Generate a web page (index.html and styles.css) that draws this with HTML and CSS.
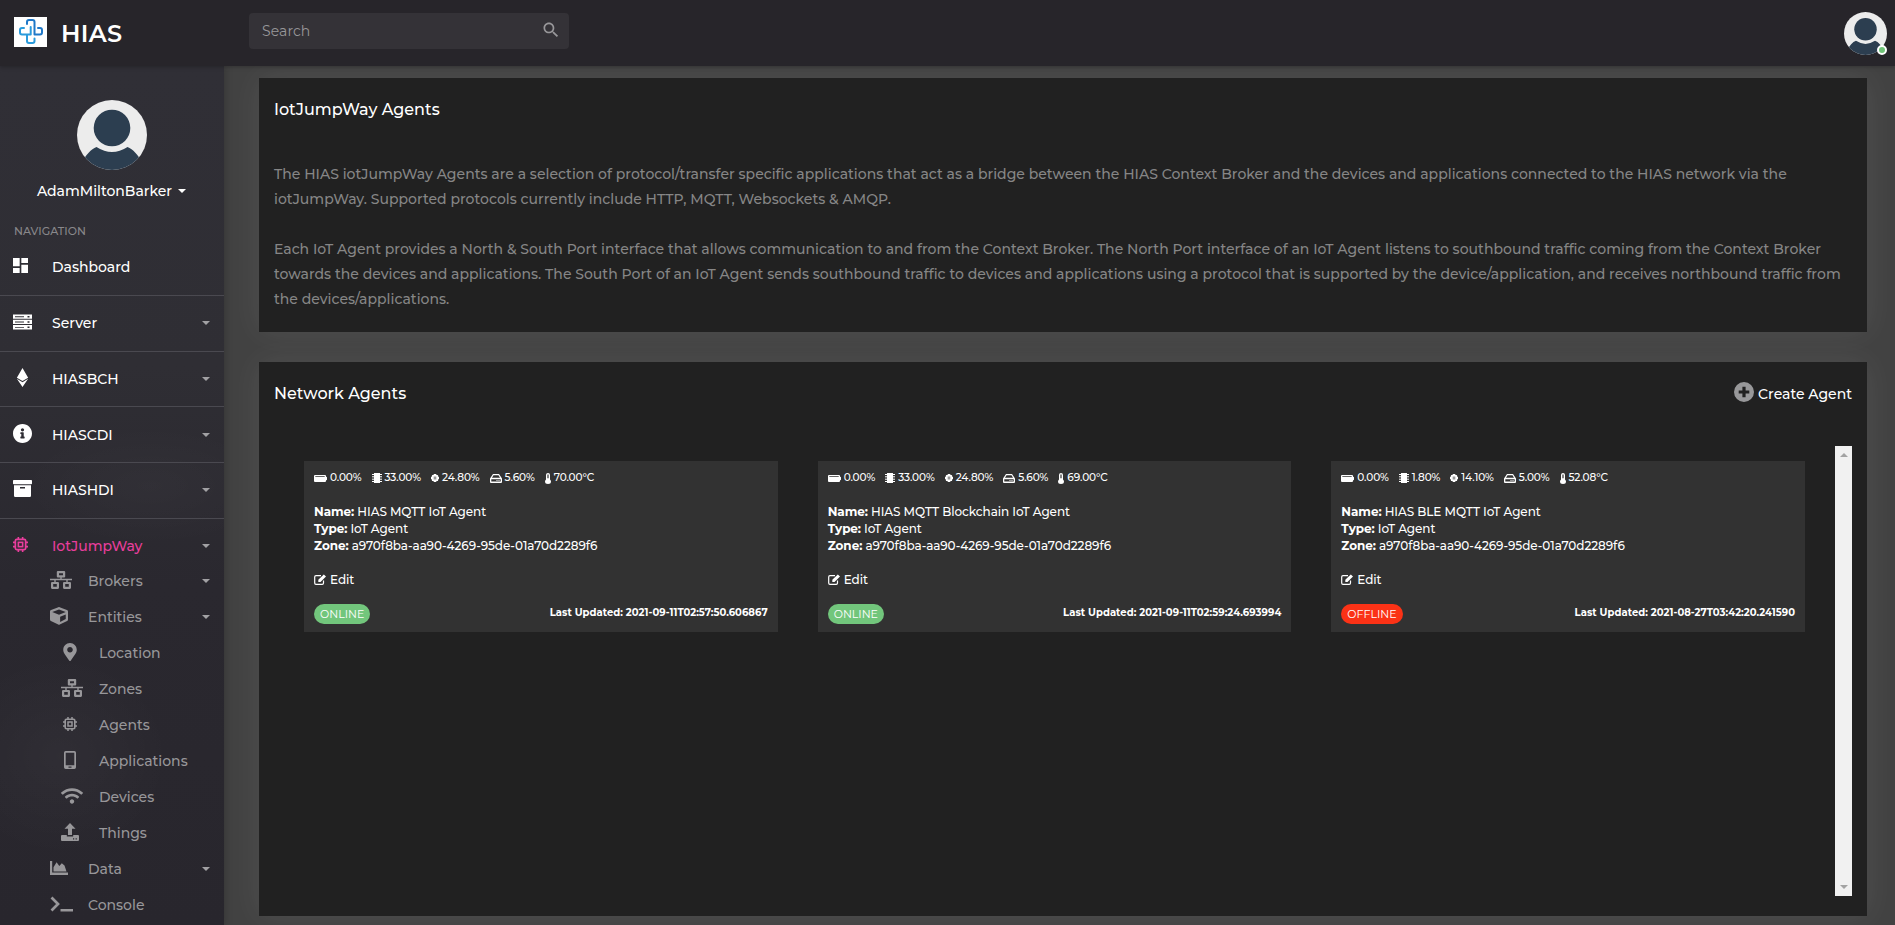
FILE: index.html
```html
<!DOCTYPE html>
<html lang="en">
<head>
    <meta charset="UTF-8">
    <meta name="viewport" content="width=device-width, initial-scale=1.0">
    <title>HIAS</title>
    <link rel="stylesheet" href="styles.css">
</head>
<body>
    <svg class="sprite">
        <symbol id="search" viewBox="0 0 24 24"><path d="M15.5 14h-.79l-.28-.27C15.41 12.59 16 11.11 16 9.5 16 5.91 13.09 3 9.5 3S3 5.91 3 9.5 5.91 16 9.5 16c1.61 0 3.09-.59 4.23-1.57l.27.28v.79l5 4.99L20.49 19l-4.99-5zm-6 0C7.01 14 5 11.99 5 9.5S7.01 5 9.5 5 14 7.01 14 9.5 11.99 14 9.5 14z"/></symbol>
        <symbol id="avatar" viewBox="0 0 70 70">
            <rect width="70" height="70" fill="#ececec"/>
            <circle cx="35" cy="28" r="18.3" fill="#2c3e50"/>
            <path d="M5 62C9 55 14 49 19.500 47Q35 57 50.500 47C56 49 61 55 65 62V72H5z" fill="#2c3e50"/>
        </symbol>
        <symbol id="dashboard" viewBox="3 3 18 18"><path d="M3 13h8V3H3v10zm0 8h8v-6H3v6zm10 0h8V11h-8v10zm0-18v6h8V3h-8z"/></symbol>
        <symbol id="server" viewBox="0 0 19 15"><path fill-rule="evenodd" d="M0 0h19v4.300H0zM0 5.300h19v4.300H0zM0 10.600h19v4.400H0zM2 1.800v.9h9v-.9zM2 7v.9h9V7zM2 12.400v.9h9v-.9zM14.500 1.500v1.400h2V1.500zM14.500 6.800v1.400h2V6.800zM14.500 12.100v1.400h2v-1.400z"/></symbol>
        <symbol id="ethereum" viewBox="0 0 320 512"><path d="M311.900 260.800L160 353.600 8 260.800 160 0l151.900 260.800zM160 383.400L8 290.600 160 512l152-221.400-152 92.800z"/></symbol>
        <symbol id="info" viewBox="8 8 496 496"><path d="M256 8C119.043 8 8 119.083 8 256c0 136.997 111.043 248 248 248s248-111.003 248-248C504 119.083 392.957 8 256 8zm0 110c23.196 0 42 18.804 42 42s-18.804 42-42 42-42-18.804-42-42 18.804-42 42-42zm56 254c0 6.627-5.373 12-12 12h-88c-6.627 0-12-5.373-12-12v-24c0-6.627 5.373-12 12-12h12v-64h-12c-6.627 0-12-5.373-12-12v-24c0-6.627 5.373-12 12-12h64c6.627 0 12 5.373 12 12v100h12c6.627 0 12 5.373 12 12v24z"/></symbol>
        <symbol id="archive" viewBox="0 0 19 17"><path fill-rule="evenodd" d="M.8 0h17.400q.8 0 .8.800v2.700q0 .8-.8.800H.8Q0 4.300 0 3.500V.8Q0 0 .8 0zM1 5.300h17v10.500q0 1.200-1.200 1.200H2.200Q1 17 1 15.800zM7 7v1.400h5V7z"/></symbol>
        <symbol id="chip" viewBox="0 0 14 14">
            <rect x="2.200" y="2.200" width="9.600" height="9.600" rx="1.200" fill="none" stroke="currentColor" stroke-width="1.600"/>
            <rect x="5" y="5" width="4" height="4" fill="none" stroke="currentColor" stroke-width="1.500"/>
            <path d="M5 0v2M9 0v2M5 12v2M9 12v2M0 5h2M0 9h2M12 5h2M12 9h2" stroke="currentColor" stroke-width="1.500"/>
        </symbol>
        <symbol id="cpu" viewBox="0 0 9 9"><path fill-rule="evenodd" d="M3 0h3v1h1.200q.8 0 .8.800V3h1v3H8v1.200q0 .8-.8.800H6v1H3V8H1.800Q1 8 1 7.200V6H0V3h1V1.800Q1 1 1.800 1H3zM3 3v.8h3V3zM3 5v.8h3V5z"/></symbol>
        <symbol id="network" viewBox="0 0 22 18">
            <path d="M0 8.500h22M11 5.500v3M5 8.500v3M17 8.500v3" fill="none" stroke="currentColor" stroke-width="1.400"/>
            <path d="M7.900 1.100h6.200v4.300H7.900zM2.100 12h5.800v4.800H2.100zM14.100 12h5.800v4.800h-5.800z" fill="none" stroke="currentColor" stroke-width="2.200" stroke-linejoin="round"/>
        </symbol>
        <symbol id="cube" viewBox="0 0 512 512"><path d="M239.100 6.300l-208 78c-18.700 7-31.100 25-31.100 45v225.100c0 18.200 10.300 34.800 26.500 42.900l208 104c13.500 6.800 29.400 6.800 42.900 0l208-104c16.300-8.100 26.500-24.800 26.500-42.900V129.300c0-20-12.400-37.900-31.100-44.900l-208-78C262 2.200 250 2.200 239.100 6.300zM256 68.400l192 72v1.100l-192 78-192-78v-1.100l192-72zm32 356V275.500l160-65v133.900l-160 80z"/></symbol>
        <symbol id="marker" viewBox="0 0 384 512"><path d="M172.268 501.670C26.970 291.031 0 269.413 0 192 0 85.961 85.961 0 192 0s192 85.961 192 192c0 77.413-26.970 99.031-172.268 309.670-9.535 13.774-29.930 13.773-39.464 0zM192 272c44.183 0 80-35.817 80-80s-35.817-80-80-80-80 35.817-80 80 35.817 80 80 80z"/></symbol>
        <symbol id="phone" viewBox="0 0 12 18"><path fill-rule="evenodd" d="M1.700 0h8.600Q12 0 12 1.700v14.600q0 1.700-1.700 1.700H1.700Q0 18 0 16.300V1.700Q0 0 1.700 0zM1.700 1.800v12.400h8.600V1.800zM4.500 15.400v1.300h3v-1.300z"/></symbol>
        <symbol id="wifi" viewBox="0 32 640 448"><path d="M634.910 154.880C457.740-8.990 182.190-8.930 5.090 154.880c-6.660 6.160-6.790 16.590-.35 22.980l34.240 33.970c6.140 6.100 16.020 6.230 22.400.38 145.920-133.680 371.300-133.710 517.250 0 6.380 5.850 16.260 5.710 22.400-.38l34.240-33.970c6.430-6.390 6.300-16.820-.36-22.980zM320 352c-35.350 0-64 28.650-64 64s28.650 64 64 64 64-28.650 64-64-28.650-64-64-64zm202.670-83.590c-115.260-101.930-290.210-101.820-405.340 0-6.900 6.100-7.120 16.690-.57 23.150l34.440 33.990c6 5.920 15.660 6.320 22.050.8 83.950-72.570 209.740-72.410 293.490 0 6.390 5.520 16.050 5.130 22.050-.8l34.440-33.990c6.560-6.460 6.330-17.060-.56-23.150z"/></symbol>
        <symbol id="upload" viewBox="0 0 18 18"><path fill-rule="evenodd" d="M9 0l5.500 5.800H11V12H7V5.800H3.500zM1 12h4.800v1.400h6.400V12H17q1 0 1 1v4q0 1-1 1H1q-1 0-1-1v-4q0-1 1-1zM12 15.300v1.200h1.200v-1.200zM14.600 15.300v1.200h1.200v-1.200z"/></symbol>
        <symbol id="chart" viewBox="0 0 18 14"><path d="M0 0h2.200v11.600H18V14H0zM3.500 10.400V6.200L6.600 1.300 9.300 5l2.500-2.700 2.700 2.200 2 5.900z"/></symbol>
        <symbol id="console" viewBox="0 0 23 16"><path d="M1.500 1.500L8 8l-6.500 6.500" fill="none" stroke="currentColor" stroke-width="2.700"/><path d="M10.500 13H23v2.500H10.500z"/></symbol>
        <symbol id="plus" viewBox="0 0 20 20"><path fill-rule="evenodd" d="M10 0a10 10 0 1 1 0 20a10 10 0 0 1 0-20zM8.400 4.700v3.700H4.700v3.200h3.700v3.700h3.200v-3.700h3.700V8.400h-3.700V4.700z"/></symbol>
        <symbol id="battery" viewBox="0 0 13 7"><path fill-rule="evenodd" d="M1 0h10q1 0 1 1v.8h.4q.6 0 .6.600v2.200q0 .6-.6.600H12V6q0 1-1 1H1Q0 7 0 6V1Q0 0 1 0zM1.300 1.300v.7h9.400v-.7z"/></symbol>
        <symbol id="memory" viewBox="0 0 10 10"><path d="M2 0h6v10H2z"/><path d="M0 1.500h10M0 3.800h10M0 6.200h10M0 8.500h10" stroke="currentColor" stroke-width="1"/></symbol>
        <symbol id="hdd" viewBox="0 0 12 9"><path fill-rule="evenodd" d="M3 0h6l3 4.500V8q0 1-1 1H1Q0 9 0 8V4.500zM3.500 1.200L2 3.800h8L8.500 1.200zM1.300 5.200v2.400h9.400V5.200zM6.500 6v.9h1V6zM8.500 6v.9h1V6z"/></symbol>
        <symbol id="thermo" viewBox="0 0 6 11"><path fill-rule="evenodd" d="M3 0Q5 0 5 2v4.500q1 .8 1 2A3 2.500 0 0 1 0 8.500q0-1.200 1-2V2Q1 0 3 0zM2.400 1.500v3.800h1.200V1.500z"/></symbol>
        <symbol id="edit" viewBox="0 0 12 11"><path d="M9.500 6.500V9q0 1.300-1.300 1.300H2Q.7 10.300.7 9V3Q.7 1.600 2 1.600h5" fill="none" stroke="currentColor" stroke-width="1.200"/><path d="M9.800.5L12 2.500 6.500 8H4.300V5.800z"/></symbol>
    </svg>

    <header class="topbar">
        <div class="brand">
            <svg class="logo" viewBox="0 0 33 30">
                <rect width="33" height="30" fill="#ffffff"/>
                <g fill="none" stroke-width="2" stroke-linejoin="round" stroke-linecap="round">
                    <path d="M13 7V5Q13 3 15 3H18.500Q20.500 3 20.500 5V17.500H26Q28 17.500 28 15.500V13Q28 11 26 11H24" stroke="#1f78c8"/>
                    <path d="M10 11H8Q6 11 6 13V15.500Q6 17.500 8 17.500H16.700V10M13 17.500V24Q13 26 15 26H18.500Q20.500 26 20.500 24V21.500" stroke="#2a9bdc"/>
                </g>
            </svg>
            <span class="brand-name">HIAS</span>
        </div>
        <div class="search">
            <span>Search</span>
            <svg><use href="#search"/></svg>
        </div>
        <div class="profile">
            <svg><use href="#avatar"/></svg>
            <span class="status-dot"></span>
        </div>
    </header>

    <div class="layout">
        <nav class="sidebar">
            <div class="user">
                <svg><use href="#avatar"/></svg>
                <div class="user-name">AdamMiltonBarker<i class="caret"></i></div>
            </div>
            <div class="nav-title">NAVIGATION</div>
            <ul class="nav">
                <li><a><svg class="i-dashboard"><use href="#dashboard"/></svg><span>Dashboard</span></a></li>
                <li><a><svg class="i-server"><use href="#server"/></svg><span>Server</span><i class="caret"></i></a></li>
                <li><a><svg class="i-ethereum"><use href="#ethereum"/></svg><span>HIASBCH</span><i class="caret"></i></a></li>
                <li><a><svg class="i-info"><use href="#info"/></svg><span>HIASCDI</span><i class="caret"></i></a></li>
                <li><a><svg class="i-archive"><use href="#archive"/></svg><span>HIASHDI</span><i class="caret"></i></a></li>
                <li class="active"><a><svg class="i-chip"><use href="#chip"/></svg><span>IotJumpWay</span><i class="caret"></i></a></li>
            </ul>
            <ul class="subnav">
                <li><svg class="i-network"><use href="#network"/></svg><span>Brokers</span><i class="caret"></i></li>
                <li><svg class="i-cube"><use href="#cube"/></svg><span>Entities</span><i class="caret"></i></li>
                <li class="deep"><svg class="i-marker"><use href="#marker"/></svg><span>Location</span></li>
                <li class="deep"><svg class="i-network"><use href="#network"/></svg><span>Zones</span></li>
                <li class="deep"><svg class="i-chip"><use href="#chip"/></svg><span>Agents</span></li>
                <li class="deep"><svg class="i-phone"><use href="#phone"/></svg><span>Applications</span></li>
                <li class="deep"><svg class="i-wifi"><use href="#wifi"/></svg><span>Devices</span></li>
                <li class="deep"><svg class="i-upload"><use href="#upload"/></svg><span>Things</span></li>
                <li><svg class="i-chart"><use href="#chart"/></svg><span>Data</span><i class="caret"></i></li>
                <li><svg class="i-console"><use href="#console"/></svg><span>Console</span></li>
            </ul>
        </nav>

        <main class="content">
            <section class="panel intro">
                <h6>IotJumpWay Agents</h6>
                <p>
                    The HIAS iotJumpWay Agents are a selection of protocol/transfer specific applications that act as a bridge between the HIAS Context Broker and the devices and applications connected to the HIAS network via the<br>
                    iotJumpWay. Supported protocols currently include HTTP, MQTT, Websockets &amp; AMQP.
                </p>
                <p>
                    Each IoT Agent provides a North &amp; South Port interface that allows communication to and from the Context Broker. The North Port interface of an IoT Agent listens to southbound traffic coming from the Context Broker<br>
                    towards the devices and applications. The South Port of an IoT Agent sends southbound traffic to devices and applications using a protocol that is supported by the device/application, and receives northbound traffic from<br>
                    the devices/applications.
                </p>
            </section>

            <section class="panel network">
                <div class="panel-head">
                    <h6>Network Agents</h6>
                    <a class="create"><svg><use href="#plus"/></svg>Create Agent</a>
                </div>
                <div class="agents-scroll">
                    <div class="agents">
                        <div class="agent">
                            <div class="stats">
                                <span><svg class="i-battery"><use href="#battery"/></svg>0.00%</span>
                                <span><svg class="i-memory"><use href="#memory"/></svg>33.00%</span>
                                <span><svg class="i-cpu"><use href="#cpu"/></svg>24.80%</span>
                                <span><svg class="i-hdd"><use href="#hdd"/></svg>5.60%</span>
                                <span><svg class="i-thermo"><use href="#thermo"/></svg>70.00°C</span>
                            </div>
                            <div class="info"><b>Name:</b> HIAS MQTT IoT Agent</div>
                            <div class="info"><b>Type:</b> IoT Agent</div>
                            <div class="info"><b>Zone:</b> a970f8ba-aa90-4269-95de-01a70d2289f6</div>
                            <a class="edit"><svg><use href="#edit"/></svg>Edit</a>
                            <div class="agent-foot">
                                <span class="badge online">ONLINE</span>
                                <span class="updated">Last Updated: 2021-09-11T02:57:50.606867</span>
                            </div>
                        </div>
                        <div class="agent">
                            <div class="stats">
                                <span><svg class="i-battery"><use href="#battery"/></svg>0.00%</span>
                                <span><svg class="i-memory"><use href="#memory"/></svg>33.00%</span>
                                <span><svg class="i-cpu"><use href="#cpu"/></svg>24.80%</span>
                                <span><svg class="i-hdd"><use href="#hdd"/></svg>5.60%</span>
                                <span><svg class="i-thermo"><use href="#thermo"/></svg>69.00°C</span>
                            </div>
                            <div class="info"><b>Name:</b> HIAS MQTT Blockchain IoT Agent</div>
                            <div class="info"><b>Type:</b> IoT Agent</div>
                            <div class="info"><b>Zone:</b> a970f8ba-aa90-4269-95de-01a70d2289f6</div>
                            <a class="edit"><svg><use href="#edit"/></svg>Edit</a>
                            <div class="agent-foot">
                                <span class="badge online">ONLINE</span>
                                <span class="updated">Last Updated: 2021-09-11T02:59:24.693994</span>
                            </div>
                        </div>
                        <div class="agent">
                            <div class="stats">
                                <span><svg class="i-battery"><use href="#battery"/></svg>0.00%</span>
                                <span><svg class="i-memory"><use href="#memory"/></svg>1.80%</span>
                                <span><svg class="i-cpu"><use href="#cpu"/></svg>14.10%</span>
                                <span><svg class="i-hdd"><use href="#hdd"/></svg>5.00%</span>
                                <span><svg class="i-thermo"><use href="#thermo"/></svg>52.08°C</span>
                            </div>
                            <div class="info"><b>Name:</b> HIAS BLE MQTT IoT Agent</div>
                            <div class="info"><b>Type:</b> IoT Agent</div>
                            <div class="info"><b>Zone:</b> a970f8ba-aa90-4269-95de-01a70d2289f6</div>
                            <a class="edit"><svg><use href="#edit"/></svg>Edit</a>
                            <div class="agent-foot">
                                <span class="badge offline">OFFLINE</span>
                                <span class="updated">Last Updated: 2021-08-27T03:42:20.241590</span>
                            </div>
                        </div>
                    </div>
                    <div class="scrollbar"><i class="arrow up"></i><i class="arrow down"></i></div>
                </div>
            </section>
        </main>
    </div>
</body>
</html>
```
FILE: styles.css
```css
* {
    box-sizing: border-box;
}
body {
    margin: 0;
    height: 925px;
    overflow: hidden;
    background-color: #424242;
    color: #ffffff;
    font-family: Montserrat, Inter, sans-serif;
    font-size: 14px;
    font-weight: 500;
}
ul {
    list-style: none;
    margin: 0;
    padding: 0;
}
h6 {
    margin: 0;
    font-size: 16px;
    font-weight: 500;
    line-height: 20px;
}
svg {
    fill: currentColor;
    flex: none;
}
.sprite {
    display: none;
}

/* top bar */
.topbar {
    position: relative;
    z-index: 2;
    display: flex;
    height: 66px;
    background-color: #27252a;
    box-shadow: 0 1px 4px rgba(0, 0, 0, 0.25);
}
.brand {
    display: flex;
    width: 249px;
    padding-left: 14px;
}
.logo {
    width: 33px;
    height: 30px;
    margin-top: 17px;
}
.brand-name {
    margin-left: 14px;
    margin-top: 19px;
    font-size: 24px;
    line-height: 29px;
    font-weight: 600;
    letter-spacing: 0.3px;
}
.search {
    display: flex;
    justify-content: space-between;
    align-items: center;
    width: 320px;
    height: 36px;
    margin-top: 13px;
    padding: 0 8px 0 13px;
    border-radius: 4px;
    background-color: #343237;
    color: #98979a;
    font-weight: 400;
    letter-spacing: 0.1px;
}
.search svg {
    width: 20px;
    height: 20px;
    margin-top: -2px;
}
.profile {
    position: relative;
    width: 43px;
    height: 43px;
    margin: 12px 8px 0 auto;
}
.profile svg {
    width: 43px;
    height: 43px;
    border-radius: 50%;
}
.status-dot {
    position: absolute;
    right: 0;
    bottom: 0;
    width: 10px;
    height: 10px;
    border: 2px solid #ffffff;
    border-radius: 50%;
    background-color: #6fc377;
}

/* sidebar */
.layout {
    display: flex;
    height: 859px;
}
.sidebar {
    width: 224px;
    flex: none;
    overflow: hidden;
    background:
        radial-gradient(ellipse 130px 60px at 150px 420px, rgba(255, 255, 255, 0.025), transparent),
        radial-gradient(ellipse 110px 100px at 60px 690px, rgba(255, 255, 255, 0.03), transparent),
        linear-gradient(#302f36 0, #2f2e34 300px, #2a282f 520px, #28262d 100%);
    box-shadow: 0 0 8px rgba(0, 0, 0, 0.25);
}
.user {
    padding-top: 34px;
    text-align: center;
}
.user svg {
    display: block;
    width: 70px;
    height: 70px;
    margin: 0 auto;
    border-radius: 50%;
}
.user-name {
    display: flex;
    justify-content: center;
    align-items: center;
    height: 20px;
    margin-top: 11px;
    padding-right: 1px;
}
.caret {
    flex: none;
    width: 0;
    border: 4px solid transparent;
    border-top-color: currentColor;
    border-bottom: 0;
}
.user-name .caret {
    margin-left: 6px;
}
.nav-title {
    height: 17px;
    margin-top: 22px;
    padding-left: 14px;
    color: #89888b;
    font-size: 11px;
    line-height: 16px;
}
.nav li {
    border-bottom: 1px solid #4a4950;
}
.nav a {
    display: flex;
    align-items: center;
    height: 54.75px;
    padding: 0 14px 0 13px;
}
.nav a svg {
    width: 19px;
    height: 19px;
    margin-right: 20px;
    margin-top: -3px;
}
.nav .caret,
.subnav .caret {
    margin-left: auto;
    border-top-color: #a2a1a4;
}
.nav .active {
    border-bottom: 0;
    color: #e83e9c;
}
.nav .i-dashboard {
    width: 15px;
    height: 15px;
    margin-right: 24px;
}
.nav .i-server {
    height: 16px;
}
.nav .i-archive {
    height: 17px;
}
.nav .active .i-chip {
    width: 15px;
    height: 15px;
    margin-right: 24px;
}
.subnav {
    margin-top: -11px;
    color: #98979a;
}
.subnav li {
    display: flex;
    align-items: center;
    height: 36px;
    padding: 0 14px 0 50px;
}
.subnav li.deep {
    padding-left: 61px;
}
.subnav svg {
    width: 18px;
    height: 18px;
    margin-right: 20px;
    margin-top: -2px;
}
.subnav .i-network {
    width: 22px;
    margin-right: 16px;
}
.subnav .i-marker {
    width: 14px;
    margin: -2px 22px 0 2px;
}
.subnav .i-chip {
    width: 14px;
    height: 14px;
    margin: -2px 22px 0 2px;
}
.subnav .i-phone {
    width: 12px;
    margin: -2px 23px 0 3px;
}
.subnav .i-wifi {
    width: 22px;
    height: 16px;
    margin-right: 16px;
}
.subnav .i-chart {
    height: 14px;
}
.subnav .i-console {
    width: 23px;
    height: 16px;
    margin-right: 15px;
}

/* content */
.content {
    flex: 1;
    min-width: 0;
    padding: 12px 28px 0 35px;
}
.panel {
    padding: 0 15px;
    background-color: #212121;
    box-shadow: 0 0 30px rgba(255, 255, 255, 0.08);
}
.intro {
    height: 254px;
    padding-top: 22px;
}
.intro p {
    margin: 0 0 25px;
    color: #868686;
    line-height: 25px;
    letter-spacing: 0.02px;
    white-space: nowrap;
}
.intro h6 {
    margin-bottom: 42px;
}
.network {
    height: 554px;
    margin-top: 30px;
    padding-top: 20px;
}
.panel-head {
    display: flex;
    justify-content: space-between;
    height: 64px;
}
.panel-head h6 {
    margin-top: 2px;
}
.create {
    display: flex;
    height: 24px;
    line-height: 24px;
}
.create svg {
    width: 20px;
    height: 20px;
    margin-right: 4px;
    color: #98989a;
}
.agents-scroll {
    display: flex;
    height: 450px;
}
.agents {
    flex: 1;
    display: grid;
    grid-template-columns: repeat(3, 1fr);
    align-items: start;
    gap: 40px;
    padding: 15px 30px;
}
.agent {
    height: 171px;
    padding: 10px;
    background-color: #323232;
    font-size: 12px;
    line-height: 17px;
    letter-spacing: -0.06px;
}
.stats {
    display: flex;
    gap: 10px;
    height: 32px;
    font-size: 10.5px;
    line-height: 14px;
    letter-spacing: -0.1px;
}
.stats span {
    display: flex;
    align-items: center;
    height: 14px;
}
.stats svg {
    width: 13px;
    height: 7px;
    margin-right: 3px;
}
.stats .i-memory {
    width: 10px;
    height: 10px;
}
.stats .i-cpu {
    width: 8px;
    height: 8px;
}
.stats .i-hdd {
    width: 12px;
    height: 9px;
}
.stats .i-thermo {
    width: 6px;
    height: 11px;
}
.edit {
    display: flex;
    align-items: center;
    height: 17px;
    margin-top: 17px;
}
.edit svg {
    width: 12px;
    height: 11px;
    margin-right: 4px;
}
.agent-foot {
    display: flex;
    justify-content: space-between;
    margin-top: 16px;
}
.badge {
    height: 20px;
    padding: 0 6px;
    border-radius: 10px;
    font-size: 11px;
    font-weight: 400;
    line-height: 20px;
    letter-spacing: 0;
}
.online {
    background-color: #72c67c;
}
.offline {
    background-color: #fb3216;
}
.updated {
    font-size: 10px;
    font-weight: 700;
    letter-spacing: 0.05px;
}
.scrollbar {
    display: flex;
    flex-direction: column;
    justify-content: space-between;
    align-items: center;
    width: 17px;
    padding: 7px 0;
    background-color: #f1f1f1;
}
.arrow {
    border: 4px solid transparent;
}
.up {
    border-top: 0;
    border-bottom-color: #a3a3a3;
}
.down {
    border-bottom: 0;
    border-top-color: #a3a3a3;
}
```
